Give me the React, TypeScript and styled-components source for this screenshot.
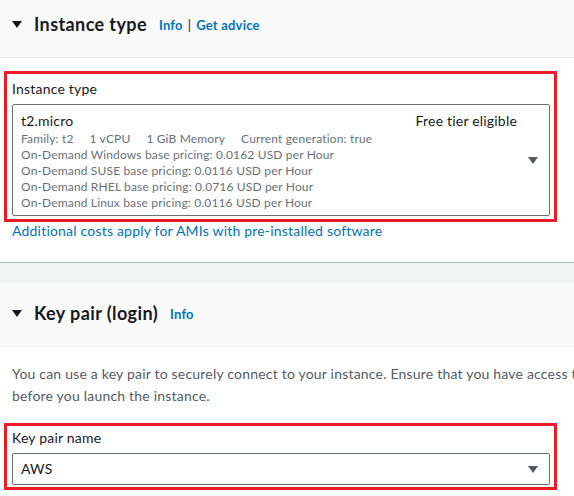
import React from 'react';
import styled, { createGlobalStyle } from 'styled-components';

const Global = createGlobalStyle`
  html, body {
    margin: 0;
    padding: 0;
    background: #f2f3f3;
    overflow: hidden;
  }
  body {
    font-family: Lato, "Open Sans", Arial, sans-serif;
    color: #16191f;
    letter-spacing: 0.2px;
    -webkit-font-smoothing: antialiased;
  }
`;

const Page = styled.div`
  width: 760px;
  margin-top: -6px;
  display: flex;
  flex-direction: column;
  gap: 20px;
`;

const Card = styled.section`
  background: #ffffff;
  border-bottom: 1px solid #aab7b8;
`;

const Header = styled.div`
  box-sizing: border-box;
  height: 64px;
  background: #fafafa;
  border-bottom: 1px solid #eaeded;
  display: flex;
  align-items: center;
  padding: 0 12px 3px;
`;

const Caret = styled.svg`
  width: 10px;
  height: 7px;
  flex: none;
  margin-right: 12px;
`;

const Title = styled.h2`
  margin: 0;
  font-size: 18px;
  font-weight: 700;
  line-height: 24px;
  letter-spacing: 0.4px;
  color: #16191f;
`;

const Links = styled.div`
  display: flex;
  align-items: center;
  margin-left: 12px;
  margin-top: 2px;
  line-height: 18px;
`;

const Link = styled.a<{ $size?: number; $bold?: boolean }>`
  color: #0073bb;
  text-decoration: none;
  font-size: ${p => p.$size ?? 13}px;
  font-weight: ${p => (p.$bold ? 700 : 400)};
`;

const Pipe = styled.span`
  color: #16191f;
  font-weight: 400;
  margin: 0 5px;
  font-size: 13px;
`;

const Content = styled.div<{ $top: number; $bottom: number }>`
  padding: ${p => p.$top}px 12px ${p => p.$bottom}px;
  display: flex;
  flex-direction: column;
`;

const Highlight = styled.div<{ $top: number; $bottom: number }>`
  box-sizing: border-box;
  width: 553px;
  margin-left: -8px;
  border: 3px solid #ec1c24;
  padding: ${p => p.$top}px 4px ${p => p.$bottom}px 5px;
  display: flex;
  flex-direction: column;
  gap: 4px;
`;

const Label = styled.div`
  font-size: 14px;
  line-height: 22px;
  color: #16191f;
`;

const Select = styled.div<{ $top: number; $bottom: number }>`
  box-sizing: border-box;
  border: 1px solid #687078;
  border-radius: 2px;
  background: #fff;
  display: flex;
  align-items: center;
  padding: ${p => p.$top}px 11px ${p => p.$bottom}px 8px;
  gap: 11px;
`;

const Option = styled.div`
  flex: 1;
  min-width: 0;
  display: flex;
  flex-direction: column;
`;

const OptionHead = styled.div`
  display: flex;
  justify-content: space-between;
  font-size: 14px;
  line-height: 21px;
  color: #16191f;
`;

const Tag = styled.span`
  color: #16191f;
`;

const Meta = styled.div`
  display: flex;
  gap: 16px;
  font-size: 12px;
  line-height: 16px;
  letter-spacing: 0.15px;
  color: #687078;
`;

const MetaLine = styled.div`
  font-size: 12px;
  line-height: 16px;
  letter-spacing: 0.15px;
  color: #687078;
`;

const Value = styled.div`
  flex: 1;
  font-size: 14px;
  line-height: 20px;
  color: #16191f;
`;

const DropIcon = styled.svg`
  width: 10px;
  height: 7px;
  flex: none;
`;

const Note = styled.div`
  font-size: 14px;
  line-height: 18px;
`;

const Description = styled.p`
  margin: 0 0 16px;
  width: 712px;
  font-size: 14px;
  line-height: 22px;
  color: #545b64;
`;

const HeaderCaret = () => (
  <Caret viewBox="0 0 10 7">
    <path d="M0 0 H10 L5 7 Z" fill="#16191f" />
  </Caret>
);

const Drop = () => (
  <DropIcon viewBox="0 0 10 7">
    <path d="M0 0 H10 L5 7 Z" fill="#545b64" />
  </DropIcon>
);

export default function App() {
  return (
    <>
      <Global />
      <Page>
        <Card>
          <Header>
            <HeaderCaret />
            <Title>Instance type</Title>
            <Links>
              <Link $bold href="#">Info</Link>
              <Pipe>|</Pipe>
              <Link $bold href="#">Get advice</Link>
            </Links>
          </Header>
          <Content $top={13} $bottom={22}>
            <Highlight $top={4} $bottom={3}>
              <Label>Instance type</Label>
              <Select $top={5} $bottom={4}>
                <Option>
                  <OptionHead>
                    <span>t2.micro</span>
                    <Tag>Free tier eligible</Tag>
                  </OptionHead>
                  <Meta>
                    <span>Family: t2</span>
                    <span>1 vCPU</span>
                    <span>1 GiB Memory</span>
                    <span>Current generation: true</span>
                  </Meta>
                  <MetaLine>On-Demand Windows base pricing: 0.0162 USD per Hour</MetaLine>
                  <MetaLine>On-Demand SUSE base pricing: 0.0116 USD per Hour</MetaLine>
                  <MetaLine>On-Demand RHEL base pricing: 0.0716 USD per Hour</MetaLine>
                  <MetaLine>On-Demand Linux base pricing: 0.0116 USD per Hour</MetaLine>
                </Option>
                <Drop />
              </Select>
            </Highlight>
            <Note>
              <Link $size={14} href="#">Additional costs apply for AMIs with pre-installed software</Link>
            </Note>
          </Content>
        </Card>
        <Card>
          <Header>
            <HeaderCaret />
            <Title>Key pair (login)</Title>
            <Links>
              <Link $bold href="#">Info</Link>
            </Links>
          </Header>
          <Content $top={16} $bottom={8}>
            <Description>
              You can use a key pair to securely connect to your instance. Ensure that you have access to the selected key pair before you launch the instance.
            </Description>
            <Highlight $top={1} $bottom={2}>
              <Label>Key pair name</Label>
              <Select $top={5} $bottom={5}>
                <Value>AWS</Value>
                <Drop />
              </Select>
            </Highlight>
          </Content>
        </Card>
      </Page>
    </>
  );
}
